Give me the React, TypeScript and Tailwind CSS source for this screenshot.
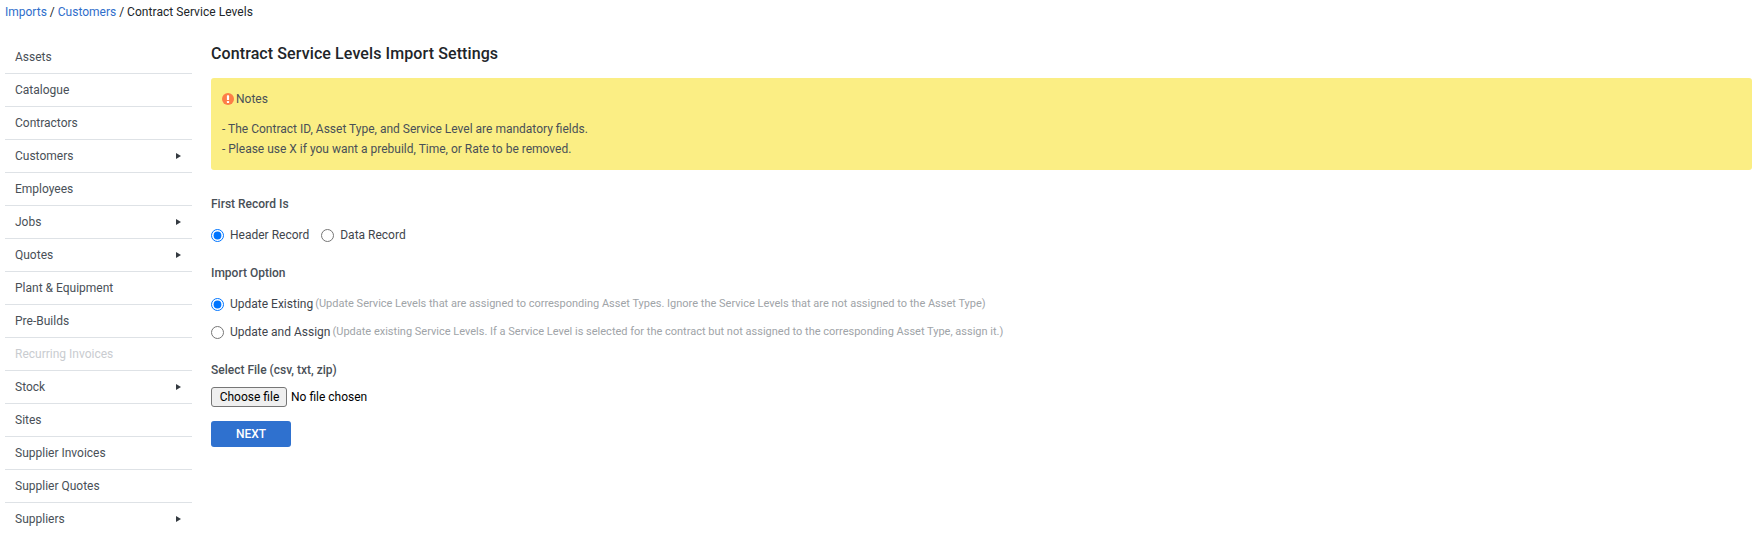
const items: { label: string; arrow?: boolean; disabled?: boolean }[] = [
  { label: "Assets" },
  { label: "Catalogue" },
  { label: "Contractors" },
  { label: "Customers", arrow: true },
  { label: "Employees" },
  { label: "Jobs", arrow: true },
  { label: "Quotes", arrow: true },
  { label: "Plant & Equipment" },
  { label: "Pre-Builds" },
  { label: "Recurring Invoices", disabled: true },
  { label: "Stock", arrow: true },
  { label: "Sites" },
  { label: "Supplier Invoices" },
  { label: "Supplier Quotes" },
  { label: "Suppliers", arrow: true },
];

export default function App() {
  return (
    <div className="h-[554px] bg-white overflow-hidden font-['Roboto',sans-serif] text-[12px] text-[#212529]">
      <div className="h-[24px] pl-[5px] leading-[24px] text-[#212529]">
        <a className="text-[#2f6ecb]">Imports</a> / <a className="text-[#2f6ecb]">Customers</a> / <span className="tracking-[0.05px]">Contract Service Levels</span>
      </div>
      <div className="flex pt-[17px]">
        <nav className="ml-[5px] w-[187px] shrink-0">
          {items.map((it, i) => (
            <div
              key={it.label}
              className={`flex h-[33px] items-center justify-between border-b pl-[10px] pr-[11px] ${i < items.length - 1 ? "border-[#dee2e6]" : "border-transparent"} ${it.disabled ? "text-[#c9ccd0]" : "text-[#495057]"}`}
            >
              <span>{it.label}</span>
              {it.arrow && <span className="h-0 w-0 border-y-[3.5px] border-l-[5px] border-y-transparent border-l-[#343a40]" />}
            </div>
          ))}
        </nav>
        <main className="ml-[19px] mr-[8px] flex-1">
          <h1 className="mt-[1px] text-[16px] leading-[24px] font-medium tracking-[0.1px] text-[#212529]">Contract Service Levels Import Settings</h1>
          <div className="mt-[12px] h-[92px] rounded-[3px] bg-[#fbee84] px-[11px] pt-[11px] text-[#495057]">
            <div className="flex h-[20px] items-center gap-[2px]">
              <svg width="12" height="12" viewBox="0 0 12 12" className="shrink-0">
                <circle cx="6" cy="6" r="6" fill="#fd7e47" />
                <rect x="4.9" y="2.3" width="2.2" height="4.7" rx="0.6" fill="#fff" />
                <rect x="4.9" y="8" width="2.2" height="2" rx="0.6" fill="#fff" />
              </svg>
              <span>Notes</span>
            </div>
            <div className="mt-[10px] leading-[20px]">- The Contract ID, Asset Type, and Service Level are mandatory fields.</div>
            <div className="leading-[20px]">- Please use X if you want a prebuild, Time, or Rate to be removed.</div>
          </div>

          <div className="mt-[25px] font-medium leading-[18px] text-[#495057]">First Record Is</div>
          <div className="mt-[13px] flex h-[18px] items-center">
            <label className="flex items-center">
              <input type="radio" name="first" defaultChecked className="m-0 h-[13px] w-[13px]" />
              <span className="ml-[6px] text-[#3f454c]">Header Record</span>
            </label>
            <label className="ml-[12px] flex items-center">
              <input type="radio" name="first" className="m-0 h-[13px] w-[13px]" />
              <span className="ml-[6px] text-[#3f454c]">Data Record</span>
            </label>
          </div>

          <div className="mt-[20px] font-medium leading-[18px] text-[#495057]">Import Option</div>
          <div className="mt-[13px] flex h-[18px] items-center">
            <input type="radio" name="option" defaultChecked className="m-0 h-[13px] w-[13px]" />
            <span className="ml-[6px] text-[#3f454c]">Update Existing</span>
            <span className="ml-[2px] text-[11px] text-[#a0a4a8]">(Update Service Levels that are assigned to corresponding Asset Types. Ignore the Service Levels that are not assigned to the Asset Type)</span>
          </div>
          <div className="mt-[10px] flex h-[18px] items-center">
            <input type="radio" name="option" className="m-0 h-[13px] w-[13px]" />
            <span className="ml-[6px] text-[#3f454c]">Update and Assign</span>
            <span className="ml-[2px] text-[11px] text-[#a0a4a8]">(Update existing Service Levels. If a Service Level is selected for the contract but not assigned to the corresponding Asset Type, assign it.)</span>
          </div>

          <div className="mt-[20px] font-medium leading-[18px] text-[#495057]">Select File (csv, txt, zip)</div>
          <div className="mt-[7px] flex h-[21px] items-center text-black">
            <button className="h-[20px] w-[76px] rounded-[3px] border border-[#767676] bg-[#efefef] pl-[1px] text-[12px]">Choose file</button>
            <span className="ml-[4px]">No file chosen</span>
          </div>
          <button className="mt-[14px] block h-[26px] w-[80px] rounded-[3px] bg-[#2f71cf] text-[12px] font-medium text-white">NEXT</button>
        </main>
      </div>
    </div>
  );
}
